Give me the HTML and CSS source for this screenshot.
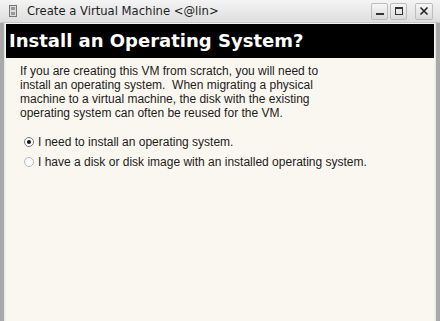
FILE: index.html
```html
<!doctype html>
<html lang="en">
<head>
  <meta charset="utf-8" />
  <title>Create a Virtual Machine</title>
  <link rel="stylesheet" href="styles.css">
</head>
<body>
  <div class="window">
    <div class="titlebar">
      <span class="appicon">
        <svg width="8" height="12" viewBox="0 0 8 12"><rect x="0.5" y="0.5" width="7" height="11" fill="#ddd" stroke="#777"/><rect x="2" y="2" width="4" height="3" fill="#999"/><rect x="2" y="7" width="4" height="3" fill="#999"/></svg>
      </span>
      <span class="title">Create a Virtual Machine &lt;@lin&gt;</span>
      <div class="controls">
        <span class="ctl">
          <svg width="10" height="10" viewBox="0 0 10 10"><rect x="1" y="7" width="8" height="2" fill="#333"/></svg>
        </span>
        <span class="ctl">
          <svg width="10" height="10" viewBox="0 0 10 10"><rect x="1.5" y="1.5" width="7" height="7" fill="none" stroke="#333"/><rect x="1" y="1" width="8" height="2" fill="#333"/></svg>
        </span>
        <span class="ctl close">
          <svg width="10" height="10" viewBox="0 0 10 10"><path d="M1.5 1.5 L8.5 8.5 M8.5 1.5 L1.5 8.5" stroke="#222" stroke-width="1.6"/></svg>
        </span>
      </div>
    </div>

    <div class="frame">
      <h1 class="banner">Install an Operating System?</h1>
      <div class="content">
        <p class="intro">If you are creating this VM from scratch, you will need to install an operating system.&nbsp; When migrating a physical machine to a virtual machine, the disk with the existing operating system can often be reused for the VM.</p>
        <label class="opt"><span class="radio on"></span>I need to install an operating system.</label>
        <label class="opt"><span class="radio"></span>I have a disk or disk image with an installed operating system.</label>
      </div>
    </div>
  </div>
</body>
</html>
```

FILE: styles.css
```css
html, body { margin:0; height:100%; }
body { font-family: "Liberation Sans", Arial, sans-serif; background:#b4b4b4; }
.window { height:321px; display:flex; flex-direction:column; background:#a9a9a9; }

.titlebar { height:22px; display:flex; align-items:center; background:linear-gradient(#f4f4f4, #dedede); border-bottom:1px solid #c8c8c8; padding:0 7px 0 9px; }
.appicon { width:8px; height:12px; display:flex; margin-right:10px; }
.title { font-family:"DejaVu Sans", sans-serif; font-size:11.6px; color:#1e1e1e; flex:1; }
.controls { display:flex; gap:2px; align-items:center; }
.ctl { width:15px; height:15px; display:flex; align-items:center; justify-content:center; border:1px solid #bdbdbd; border-radius:2px; background:linear-gradient(#f6f6f6, #dadada); }
.ctl.close { margin-left:6px; width:16px; }

.frame { flex:1; margin:0 4px 0 4px; border-left:1px solid #e6e6e6; border-right:1px solid #e6e6e6; padding:1px 1px 0 1px; background:#f5f3ee; display:flex; flex-direction:column; }
.banner { margin:0; background:#000; color:#fff; font-family:"DejaVu Sans", sans-serif; font-weight:bold; font-size:18px; height:34px; line-height:34px; padding-left:3px; }
.content { flex:1; background:#faf7f0; padding:6px 14px 0 14px; }
.intro { margin:0 0 12px 0; font-size:12px; line-height:14px; color:#1c1c1c; width:310px; }
.opt { display:flex; align-items:center; font-size:12px; color:#1c1c1c; height:20px; }
.radio { width:8px; height:8px; border-radius:50%; border:1px solid #b8b8b8; background:#fff; margin:0 4px 0 4px; display:flex; align-items:center; justify-content:center; }
.radio.on { border-color:#777; }
.radio.on::after { content:""; width:4px; height:4px; border-radius:50%; background:#111; }
```
